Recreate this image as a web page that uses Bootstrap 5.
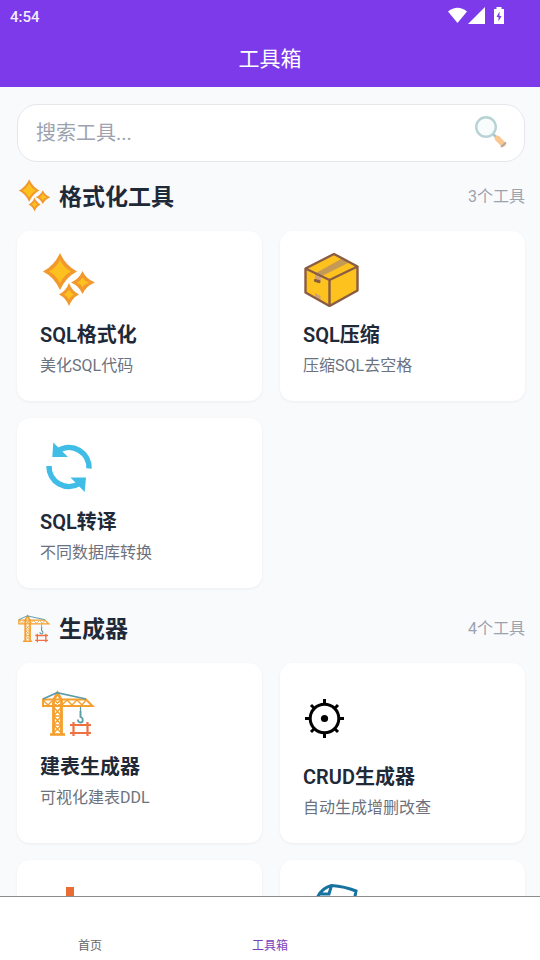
<!DOCTYPE html>
<html lang="zh-CN">
<head>
<meta charset="utf-8">
<meta name="viewport" content="width=device-width, initial-scale=1">
<title>工具箱</title>
<link href="https://cdn.jsdelivr.net/npm/bootstrap@5.3.0/dist/css/bootstrap.min.css" rel="stylesheet">
<style>
body { font-family: Roboto, "Noto Sans CJK SC", sans-serif; background: #f9fafc; color: #1f2937; }
.app-top { background: #7c3aea; height: 87px; }
.status-row { height: 31px; padding: 0 35px 0 10px; font-size: 15px; font-weight: 500; }
.status-row span { opacity: .92; line-height: 24px; padding-top: 2px; }
.app-title { font-size: 21px; line-height: 56px; font-weight: 400; }
.app-main { padding: 17px 15px 17px 17px; min-height: 0; scrollbar-width: none; }
.app-main::-webkit-scrollbar { display: none; }
.search-box { height: 58px; border-radius: 20px; border-color: #e5e7eb !important; padding: 0 16px 0 18px; }
.search-box input { font-size: 20px; }
.search-box input:focus { box-shadow: none; }
.search-box input::placeholder { color: #9ca3af; opacity: 1; }
.sec-head { height: 36px; margin: 22px 0 17px; }
.sec-first { margin-top: 16px; }
.sec-head svg { width: 34px; height: 34px; }
.sec-title { font-size: 23px; line-height: 40px; font-weight: 700; }
.sec-count { font-size: 16px; line-height: 38px; color: #9ca3af; }
.tool-grid { display: grid; grid-template-columns: 1fr 1fr; gap: 17px 18px; }
.tool { background: #fff; border-radius: 13px; padding: 20px 23px 24px; min-height: 170px; color: inherit; box-shadow: 0 1px 3px rgba(31, 41, 55, .06); }
.tool svg { width: 56px; height: 56px; }
.tool svg.tall { height: 66px; }
.tool-name { font-size: 20px; line-height: 28px; font-weight: 600; margin-top: 14px; }
.tool-desc { font-size: 16px; line-height: 22px; margin-top: 6px; color: #6b7280; }
.tab-row { height: 64px; border-top: 1px solid #8c8c8e; background: #fff; font-size: 12px; line-height: 18px; }
.tab-row a { color: #666; padding-top: 40px; }
.tab-row a.on { color: #7a3fbf; }
</style>
<script src="https://cdn.jsdelivr.net/npm/bootstrap@5.3.0/dist/js/bootstrap.bundle.min.js"></script>
</head>
<body>
<svg class="d-none" aria-hidden="true">
  <symbol id="sparkles" viewBox="0 0 56 56">
    <g fill="#f2992e">
      <path d="M20 2Q26 15 37 20.500Q26 26 20 39Q14 26 3 20.500Q14 15 20 2Z"/>
      <path d="M42.500 20Q46 28 55 31.500Q46 35 42.500 43Q39 35 31 31.500Q39 28 42.500 20Z"/>
      <path d="M29 32Q32 40 39 43.500Q32 47 29 55Q26 47 19 43.500Q26 40 29 32Z"/>
    </g>
    <g fill="#fdc11f">
      <path d="M20 9Q24 17 31 20.500Q24 24 20 32Q16 24 9 20.500Q16 17 20 9Z"/>
      <path d="M42.500 26.500Q44.500 30 49 31.500Q44.500 33 42.500 36.500Q40.500 33 37 31.500Q40.500 30 42.500 26.500Z"/>
      <path d="M29 38.500Q31 42 34 43.500Q31 45 29 48.500Q27 45 24 43.500Q27 42 29 38.500Z"/>
    </g>
  </symbol>
  <symbol id="crane" viewBox="0 0 56 56">
    <g fill="none" stroke="#f5a02d" stroke-width="2">
      <path d="M3 16.500H46L52.500 23H3Z"/>
      <path d="M13.500 51V17L17.500 10L21.500 17V51" stroke-width="2.800"/>
      <path d="M13.500 24L21.500 33L13.500 42L21.500 50M21.500 24L13.500 33L21.500 42L13.500 50M13.500 33H21.500M13.500 42H21.500" stroke-width="1.400"/>
      <path d="M3 17L8 22L13 17M14 17L21 23M21 17L14 23M22 22L27 17L32 22L37 17L42 22L46 17" stroke-width="1.400"/>
      <path d="M10 51.500H25" stroke-width="2.600"/>
    </g>
    <path d="M3 16L17 9.700L46 16" fill="none" stroke="#5d9ba8" stroke-width="1.600"/>
    <path d="M40.500 24V34" stroke="#5d9ba8" stroke-width="1.200"/>
    <path d="M40.500 28V34C43.500 35 43.500 39.500 40.500 39.500C38.500 39.500 37.800 38 38 36.500" fill="none" stroke="#5d9ba8" stroke-width="1.800"/>
    <path d="M30 42H51M30 50H51M33.500 39V53M47.500 39V53" stroke="#ee7043" stroke-width="2.200"/>
  </symbol>
</svg>

<div class="vh-100 d-flex flex-column">
  <header class="app-top text-white flex-shrink-0">
    <div class="status-row d-flex align-items-center justify-content-between">
      <span>4:54</span>
      <svg width="58" height="18" viewBox="0 0 58 18" aria-hidden="true">
        <path d="M1 4.500Q10.500 -3 20 4.500L10.500 16Z" fill="#fff"/>
        <path d="M21 17H38V0Z" fill="#fff"/>
        <path d="M49.500 0H54.500V2H57V17H47V2H49.500Z" fill="#fff"/>
        <path d="M52.500 4.500L49.500 10H51.500V14.500L54.500 9H52.500Z" fill="#7c3aea"/>
      </svg>
    </div>
    <h1 class="app-title text-center mb-0">工具箱</h1>
  </header>

  <main class="app-main flex-grow-1 overflow-auto">
    <form class="search-box d-flex align-items-center bg-white border">
      <input class="form-control border-0 p-0 bg-transparent" type="text" aria-label="搜索工具" placeholder="搜索工具...">
      <button class="btn border-0 p-0 flex-shrink-0 lh-1" type="button" aria-label="搜索">
        <svg width="34" height="34" viewBox="1 2 34 34" aria-hidden="true">
          <path d="M20.500 20.500L24 24" stroke="#a9c3c6" stroke-width="2.500"/>
          <circle cx="13" cy="13" r="9.800" fill="#f9fcfd" stroke="#b8d3d5" stroke-width="2.400"/>
          <path d="M24.500 24.500L30 30" stroke="#fac791" stroke-width="5.500" stroke-linecap="round"/>
          <path d="M28.500 32.500L32.500 29" stroke="#b3a5a0" stroke-width="1.800" stroke-linecap="round"/>
        </svg>
      </button>
    </form>

    <section>
      <div class="sec-head sec-first d-flex justify-content-between">
        <div class="d-flex gap-2">
          <svg aria-hidden="true"><use href="#sparkles"/></svg>
          <h2 class="sec-title mb-0">格式化工具</h2>
        </div>
        <span class="sec-count">3个工具</span>
      </div>
      <div class="tool-grid">
        <a class="tool text-decoration-none" href="#">
          <svg class="d-block" aria-hidden="true"><use href="#sparkles"/></svg>
          <h3 class="tool-name mb-0">SQL格式化</h3>
          <p class="tool-desc mb-0">美化SQL代码</p>
        </a>
        <a class="tool text-decoration-none" href="#">
          <svg class="d-block" viewBox="0 0 56 56" aria-hidden="true">
            <path d="M31 3L54.500 15.500V39.500L26.500 55L2.500 41.500V17.500Z" fill="#fdc21d"/>
            <path d="M12 22.500L18 25.500L46 11.500L39 7.500Z" fill="#c49a56"/>
            <path d="M12 22.500L18 25.500V30L12 27ZM12 42L17.500 45V49.500L12 46.500Z" fill="#d0a27c"/>
            <path d="M31 3L54.500 15.500V39.500L26.500 55L2.500 41.500V17.500ZM2.500 17.500L26.500 29L54.500 15.500M26.500 29V55" fill="none" stroke="#8a5c43" stroke-width="2.400" stroke-linejoin="round"/>
            <path d="M12.500 29.500L16 30.500" stroke="#8a5c43" stroke-width="3.200" stroke-linecap="round"/>
          </svg>
          <h3 class="tool-name mb-0">SQL压缩</h3>
          <p class="tool-desc mb-0">压缩SQL去空格</p>
        </a>
        <a class="tool text-decoration-none" href="#">
          <svg class="d-block" viewBox="0 0 56 56" aria-hidden="true">
            <path d="M49 30.500A20 20 0 0 0 18.500 12.500M9 28A20 20 0 0 0 39.500 45.500" fill="none" stroke="#40bde6" stroke-width="5.500"/>
            <path d="M13.300 4.500L12.300 19H28ZM46 39.500L44.700 54L30.500 39.500Z" fill="#40bde6"/>
          </svg>
          <h3 class="tool-name mb-0">SQL转译</h3>
          <p class="tool-desc mb-0">不同数据库转换</p>
        </a>
      </div>
    </section>

    <section>
      <div class="sec-head d-flex justify-content-between">
        <div class="d-flex gap-2">
          <svg aria-hidden="true"><use href="#crane"/></svg>
          <h2 class="sec-title mb-0">生成器</h2>
        </div>
        <span class="sec-count">4个工具</span>
      </div>
      <div class="tool-grid">
        <a class="tool text-decoration-none" href="#">
          <svg class="d-block" aria-hidden="true"><use href="#crane"/></svg>
          <h3 class="tool-name mb-0">建表生成器</h3>
          <p class="tool-desc mb-0">可视化建表DDL</p>
        </a>
        <a class="tool text-decoration-none" href="#">
          <svg class="d-block tall" viewBox="0 0 56 66" aria-hidden="true">
            <g fill="none" stroke="#000" stroke-width="3">
              <circle cx="21.500" cy="35.500" r="14.300"/>
              <path d="M21.500 16V21M21.500 50V55M2 35.500H7M36 35.500H41M8 22L12 26M31 45L35 49M35 22L31 26M12 45L8 49"/>
            </g>
            <circle cx="21.500" cy="35.500" r="3.600"/>
          </svg>
          <h3 class="tool-name mb-0">CRUD生成器</h3>
          <p class="tool-desc mb-0">自动生成增删改查</p>
        </a>
        <a class="tool" href="#" aria-label="工具三">
          <svg class="d-block" viewBox="0 0 56 56" aria-hidden="true">
            <path d="M26 7H34V26H42L30 40L18 26H26Z" fill="#ea6c35"/>
          </svg>
        </a>
        <a class="tool" href="#" aria-label="工具四">
          <svg class="d-block" viewBox="0 0 56 56" aria-hidden="true">
            <path d="M13.500 19.500Q18 8 28.500 5.500Q42 6.500 53 11L46 48L12 40ZM28.500 5.500L26 14H17M20 18L24 19" fill="none" stroke="#1673a0" stroke-width="3"/>
          </svg>
        </a>
      </div>
    </section>
  </main>

  <nav class="tab-row row g-0 flex-shrink-0 text-center" aria-label="主导航">
    <a class="col-4 text-decoration-none" href="#">首页</a>
    <a class="col-4 text-decoration-none on" href="#" aria-current="page">工具箱</a>
  </nav>
</div>
</body>
</html>
